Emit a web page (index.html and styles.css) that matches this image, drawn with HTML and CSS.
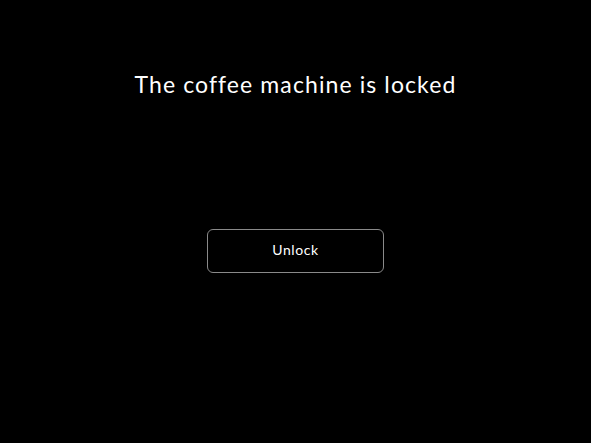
FILE: index.html
```
<!DOCTYPE html>
<html><head><meta charset="utf-8"><link rel="stylesheet" href="styles.css"></head>
<body>
<main class="screen">
  <h1 class="title">The coffee machine is locked</h1>
  <button class="unlock">Unlock</button>
</main>
</body></html>
```
FILE: styles.css
```
html, body { margin: 0; padding: 0; background: #000; }
.screen {
  width: 591px; height: 443px;
  display: flex; flex-direction: column; align-items: center;
  font-family: Lato, "Noto Sans", sans-serif; color: #fff;
}
.title {
  margin: 70px 0 0 0;
  font-size: 23px; font-weight: 400; line-height: 28px;
  letter-spacing: 1.1px;
}
.unlock {
  margin-top: 131px;
  width: 177px; height: 44px;
  padding: 0 0 4px 0;
  background: #000; color: #fff;
  border: 1px solid #8a8a8a; border-radius: 6px;
  font-family: Lato, "Noto Sans", sans-serif; font-size: 14px; font-weight: 400;
  letter-spacing: 0.6px;
}
```
